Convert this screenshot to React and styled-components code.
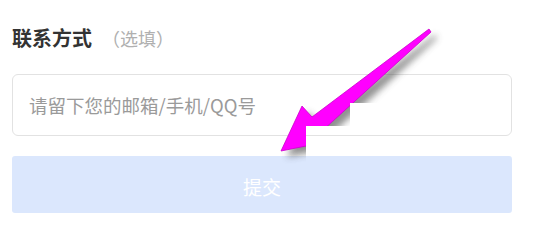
import React from 'react'
import styled, { createGlobalStyle } from 'styled-components'

const GlobalStyle = createGlobalStyle`
  html, body {
    margin: 0;
    padding: 0;
    background: #fff;
  }
  body {
    font-family: "Noto Sans CJK SC", "Noto Sans", sans-serif;
  }
`

const Page = styled.div`
  position: relative;
  width: 550px;
  height: 234px;
  box-sizing: border-box;
  padding: 25px 38px 0 12px;
  overflow: hidden;
`

const Form = styled.form`
  display: flex;
  flex-direction: column;
`

const Label = styled.div`
  display: flex;
  align-items: baseline;
  height: 26px;
  line-height: 26px;
  font-size: 20px;
  font-weight: 700;
  color: #333;
  margin-bottom: 23px;
`

const Optional = styled.span`
  font-size: 18px;
  font-weight: 400;
  color: #b0b0b0;
  margin-left: 10px;
`

const Input = styled.input`
  box-sizing: border-box;
  width: 100%;
  height: 62px;
  padding: 0 16px;
  border: 1px solid #e2e2e2;
  border-radius: 6px;
  font-family: inherit;
  font-size: 18.5px;
  color: #333;
  outline: none;

  &::placeholder {
    color: #9a9a9a;
  }
`

const Submit = styled.button`
  box-sizing: border-box;
  width: 100%;
  height: 57px;
  margin-top: 20px;
  padding-top: 5px;
  border: none;
  border-radius: 3px;
  background: #dbe7fd;
  color: #fff;
  font-family: inherit;
  font-size: 19px;
  cursor: not-allowed;
`

const Overlay = styled.svg`
  position: absolute;
  left: 0;
  top: 0;
  pointer-events: none;
`

const arrowPath = 'M429 29 L312 117 L302 106 L281 151 L326 142 L322 131 L431 32 Z'

const Arrow = () => (
  <Overlay width="550" height="234" viewBox="0 0 550 234">
    <defs>
      <filter id="blur" x="-20%" y="-20%" width="140%" height="140%">
        <feGaussianBlur stdDeviation="3.5" />
      </filter>
      <clipPath id="cut">
        <path d="M0 0H550V103H350V126H306V234H0Z" />
      </clipPath>
    </defs>
    <g clipPath="url(#cut)">
      <path d={arrowPath} fill="#444" opacity="0.6" transform="translate(6 6)" filter="url(#blur)" />
      <path d={arrowPath} fill="#f0f" stroke="#c0c" strokeWidth="0.8" strokeLinejoin="round" />
    </g>
  </Overlay>
)

export default function App() {
  return (
    <>
      <GlobalStyle />
      <Page>
        <Form onSubmit={(e) => e.preventDefault()}>
          <Label>
            联系方式<Optional>（选填）</Optional>
          </Label>
          <Input placeholder="请留下您的邮箱/手机/QQ号" />
          <Submit type="submit">提交</Submit>
        </Form>
        <Arrow />
      </Page>
    </>
  )
}
